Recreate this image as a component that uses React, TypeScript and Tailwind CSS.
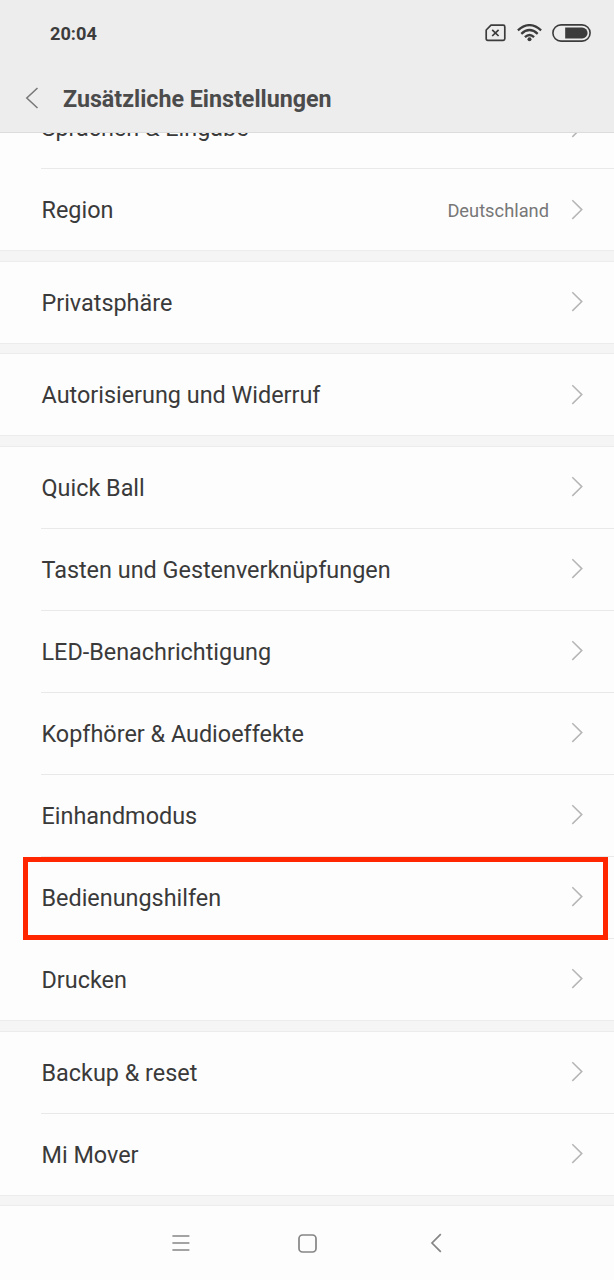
type Item = { label: string; value?: string; highlighted?: boolean };

const groups: Item[][] = [
  [{ label: "Sprachen & Eingabe" }, { label: "Region", value: "Deutschland" }],
  [{ label: "Privatsphäre" }],
  [{ label: "Autorisierung und Widerruf" }],
  [
    { label: "Quick Ball" },
    { label: "Tasten und Gestenverknüpfungen" },
    { label: "LED-Benachrichtigung" },
    { label: "Kopfhörer & Audioeffekte" },
    { label: "Einhandmodus" },
    { label: "Bedienungshilfen", highlighted: true },
    { label: "Drucken" },
  ],
  [{ label: "Backup & reset" }, { label: "Mi Mover" }],
];

const StatusBar = () => (
  <div className="flex h-[66px] items-center justify-between pl-[50px] pr-[23px] text-[#3c3c3c]">
    <span className="pt-[2px] text-[18.2px] font-bold leading-none">20:04</span>
    <div className="flex items-center">
      <svg width="21" height="18" viewBox="0 0 21 18" fill="none" stroke="currentColor" className="mr-[11px]">
        <path d="M6 1.2H18.2Q19.8 1.2 19.8 2.8V14.7Q19.8 16.3 18.2 16.3H2.8Q1.2 16.3 1.2 14.7V6Z" strokeWidth="1.7" strokeLinejoin="round" />
        <path d="M7.2 5.8L13.6 12M13.6 5.8L7.2 12" strokeWidth="1.7" />
      </svg>
      <svg width="25" height="18" viewBox="0 0 25 18" fill="none" stroke="currentColor" strokeWidth="2.3" className="mr-[10px]">
        <path d="M.9 6.3Q12.5-4 24.1 6.3" />
        <path d="M4.3 9.8Q12.5 2.3 20.7 9.8" />
        <path d="M7.9 13.2Q12.5 8.9 17.1 13.2" />
        <circle cx="12.5" cy="15.3" r="2" fill="currentColor" stroke="none" />
      </svg>
      <svg width="39" height="18" viewBox="0 0 39 18" fill="none">
        <rect x=".9" y=".9" width="37.2" height="16.2" rx="8.1" stroke="currentColor" strokeWidth="1.6" />
        <path d="M13.2 3.6H30.2A5.4 5.4 0 0 1 30.2 14.4H13.2Z" fill="currentColor" />
      </svg>
    </div>
  </div>
);

const Header = () => (
  <header className="relative z-10 h-[133px] shrink-0 border-b border-[#dcdcdc] bg-[#ededed]">
    <StatusBar />
    <div className="flex h-[66px] items-center pl-[25px]">
      <svg width="14" height="22" viewBox="0 0 14 22" fill="none" stroke="#777" strokeWidth="1.5" className="-mt-[2px]">
        <path d="M12.5 1L1.8 11L12.5 21" />
      </svg>
      <h1 className="ml-6 pt-[2px] text-[23.25px] font-bold leading-none text-[#4b4b4b]">Zusätzliche Einstellungen</h1>
    </div>
  </header>
);

const Row = ({ label, value, highlighted }: Item) => (
  <div className="group/row relative pl-[41px]">
    <div className="box-content flex h-[81px] items-center border-b border-[#e9e9e9] pr-[31px] group-last/row:border-b-0">
      <span className="flex-1 pl-[.5px] pt-[2px] text-[23.4px] leading-[23px] text-[#3a3a3a]">{label}</span>
      {value && <span className="mr-[22px] pt-[2px] text-[18.3px] leading-[19px] text-[#777]">{value}</span>}
      <svg width="12" height="22" viewBox="0 0 12 22" fill="none" stroke="#b5b5b5" strokeWidth="1.5">
        <path d="M1.3 1.3L10.8 10.6L1.3 19.9" />
      </svg>
    </div>
    {highlighted && <div className="absolute -bottom-px left-[23px] right-[6px] top-0 border-5 border-[#ff2600]" />}
  </div>
);

const NavBar = () => (
  <nav className="flex flex-1 items-center bg-[#fdfdfd] pl-[172px]">
    <svg width="18" height="18" viewBox="0 0 18 18" stroke="#858585" strokeWidth="1.7">
      <path d="M.4 2H17.4M.4 9H17.4M.4 16H17.4" />
    </svg>
    <svg width="19" height="19" viewBox="0 0 19 19" fill="none" stroke="#858585" strokeWidth="1.7" className="ml-[107.5px]">
      <rect x="1" y="1" width="17" height="17" rx="3.5" />
    </svg>
    <svg width="12" height="20" viewBox="0 0 12 20" fill="none" stroke="#858585" strokeWidth="1.7" className="ml-[113.5px]">
      <path d="M10.8 1.2L2 10L10.8 18.8" />
    </svg>
  </nav>
);

export default function App() {
  return (
    <div className="flex h-[1280px] w-[614px] flex-col overflow-hidden bg-[#fdfdfd] font-['Roboto',sans-serif]">
      <Header />
      <main className="-mt-[46px] shrink-0">
        {groups.map((items) => (
          <section key={items[0].label}>
            <div>
              {items.map((item) => (
                <Row key={item.label} {...item} />
              ))}
            </div>
            <div className="h-[11.67px] border-y border-[#ececec] bg-[#f5f5f5]" />
          </section>
        ))}
      </main>
      <NavBar />
    </div>
  );
}
